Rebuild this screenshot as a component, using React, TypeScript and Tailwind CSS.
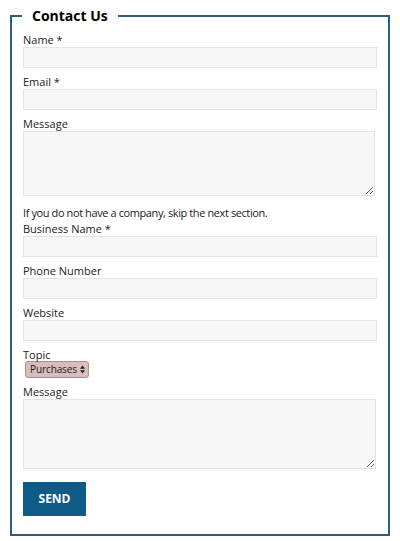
import React from "react";

const font = { fontFamily: '"Open Sans", "Noto Sans", sans-serif' };

const Label = ({ text }: { text: string }) => (
  <label className="block text-[11px] leading-[14px] text-[#222]">{text}</label>
);

const Input = () => (
  <input
    type="text"
    className="block w-full h-[21px] mb-[7px] bg-[#f7f7f7] border border-[#e4e4e4] outline-none"
  />
);

const App = () => {
  return (
    <div className="w-[400px] h-[541px] bg-white pt-[6px] px-[10px]" style={font}>
      <fieldset className="w-[380px] border-2 border-[#2c5f82] px-[11px] pt-[7px] pb-[18px]">
        <legend className="-ml-px px-[10px] text-[14px] leading-[20px] font-bold text-black">
          Contact Us
        </legend>

        <Label text="Name *" />
        <Input />

        <Label text="Email *" />
        <Input />

        <Label text="Message" />
        <textarea className="block w-[352px] h-[65px] mb-[10px] bg-[#f7f7f7] border border-[#e4e4e4] outline-none resize-y" />

        <p className="mb-[2px] text-[11px] leading-[14px] tracking-[-0.4px] text-[#222]">
          If you do not have a company, skip the next section.
        </p>

        <Label text="Business Name *" />
        <Input />

        <Label text="Phone Number" />
        <Input />

        <Label text="Website" />
        <Input />

        <Label text="Topic" />
        <div className="-mt-px ml-[2px] mb-[7px] flex items-center gap-[2px] w-[64px] h-[17px] rounded-[3px] bg-[#d9bcbc] border border-[#a98f8f] pl-[4px] pr-[3px] text-[10px] text-[#222]">
          <span className="flex-1 leading-[15px] tracking-[-0.1px]">Purchases</span>
          <svg width="5" height="9" viewBox="0 0 5 9" className="shrink-0">
            <path d="M2.5 0.5L5 3.8H0Z" fill="#222" />
            <path d="M2.5 8.5L5 5.2H0Z" fill="#222" />
          </svg>
        </div>

        <Label text="Message" />
        <textarea className="block w-[353px] h-[70px] mb-[13px] bg-[#f7f7f7] border border-[#e4e4e4] outline-none resize-y" />

        <button className="block w-[63px] h-[34px] bg-[#0f5b87] text-white text-[12px] font-bold">
          SEND
        </button>
      </fieldset>
    </div>
  );
};

export default App;
